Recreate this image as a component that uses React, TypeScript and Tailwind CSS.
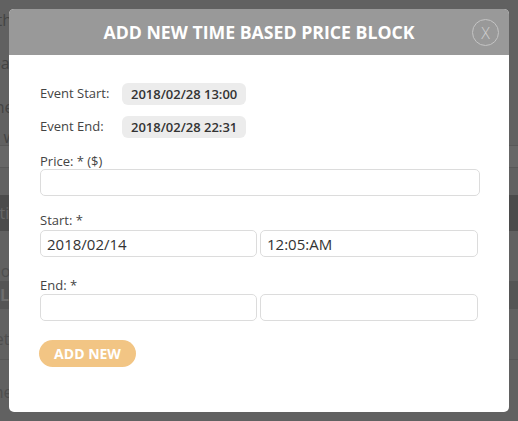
import React from 'react';

// Background page behind the dimmed overlay
function BackgroundPage() {
  return (
    <div className="h-[421px] w-full bg-[#616161] text-[16px] text-[#444] overflow-hidden">
      <div className="pt-[9px] pl-0 -ml-[20px] flex flex-col">
        <p className="h-[43px] leading-[22px]">with</p>
        <p className="h-[44px] leading-[22px]">clear</p>
        <p className="h-[30px] leading-[22px]">time</p>
        <p className="h-[16px] leading-[22px]">do w</p>
      </div>
      <div className="mt-[3px] h-[23px] border-y border-[#585858] bg-[#676767]" />
      <div className="mt-[27px] h-[36px] bg-[#4b4b4b] text-[#666] leading-[36px] -ml-[24px]">Setting</div>
      <p className="mt-[30px] h-[20px] text-[#4e4e4e] -ml-[14px] leading-[20px]">more</p>
      <div className="mt-[0px] h-[28px] bg-[#555] text-[#6e6e6e] leading-[28px] font-bold">L</div>
      <p className="mt-[18px] -ml-[14px] text-[#4e4e4e]">Set</p>
      <div className="mt-[8px] h-px bg-[#585858]" />
      <p className="mt-[20px] -ml-[12px] text-[#4e4e4e]">the c</p>
    </div>
  );
}

function Input({ value = '', className = '' }: { value?: string; className?: string }) {
  return (
    <input
      readOnly
      value={value}
      className={`h-[27px] rounded-[5px] border border-[#dcdcdc] bg-white px-[6px] text-[15px] text-[#333] outline-none ${className}`}
    />
  );
}

export default function App() {
  return (
    <div className="relative h-[421px] w-[518px] overflow-hidden" style={{ fontFamily: '"Open Sans", "Liberation Sans", sans-serif' }}>
      <BackgroundPage />

      <div className="absolute left-[9px] top-[9px] w-[500px] h-[403px] bg-white rounded-[5px] overflow-hidden flex flex-col">
        {/* Header */}
        <div className="relative h-[46px] bg-[#999999] flex items-center justify-center">
          <h2 className="text-[17.7px] font-bold text-white">ADD NEW TIME BASED PRICE BLOCK</h2>
          <div className="absolute right-[10px] top-[10px] w-[27px] h-[27px] rounded-full border border-[#c4c4c4] flex items-center justify-center text-[16px] font-light text-[#cfcfcf]">
            X
          </div>
        </div>

        {/* Body */}
        <div className="px-[31px] pt-[28px] text-[13px] text-[#444]">
          <div className="flex items-center h-[22px]">
            <span className="w-[82px]">Event Start:</span>
            <span className="h-[22px] px-[9px] rounded-[6px] bg-[#ececec] font-semibold text-[#333] leading-[22px]">2018/02/28 13:00</span>
          </div>
          <div className="flex items-center h-[22px] mt-[11px]">
            <span className="w-[82px]">Event End:</span>
            <span className="h-[22px] px-[9px] rounded-[6px] bg-[#ececec] font-semibold text-[#333] leading-[22px]">2018/02/28 22:31</span>
          </div>

          <div className="mt-[15px]">
            <label className="block leading-[16px]">Price: * ($)</label>
            <Input className="w-[440px] block" />
          </div>

          <div className="mt-[16px]">
            <label className="block leading-[16px]">Start: *</label>
            <div className="mt-[2px] flex gap-[3px]">
              <Input value="2018/02/14" className="w-[217px]" />
              <Input value="12:05:AM" className="w-[218px]" />
            </div>
          </div>

          <div className="mt-[20px]">
            <label className="block leading-[16px]">End: *</label>
            <div className="mt-[1px] flex gap-[3px]">
              <Input className="w-[217px]" />
              <Input className="w-[218px]" />
            </div>
          </div>

          <button className="mt-[19px] -ml-[1px] h-[27px] w-[97px] rounded-full bg-[#f2c584] text-white font-bold text-[14px]">
            ADD NEW
          </button>
        </div>
      </div>
    </div>
  );
}
